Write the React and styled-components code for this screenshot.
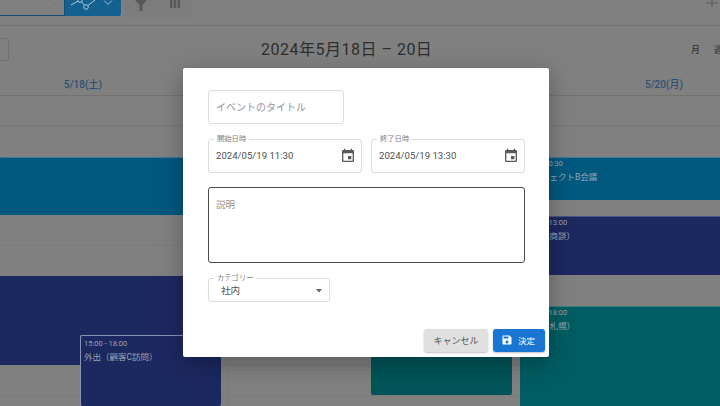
import React from "react";
import styled, { createGlobalStyle } from "styled-components";

const Global = createGlobalStyle`
  html, body { margin: 0; padding: 0; width: 720px; height: 406px; overflow: hidden; background: #808080; }
  * { box-sizing: border-box; }
  body { font-family: Roboto, "Noto Sans CJK JP", sans-serif; }
`;

const Page = styled.div`
  position: relative;
  width: 720px;
  height: 406px;
  overflow: hidden;
  background: #808080;
`;

const Toolbar = styled.div`
  height: 26px;
  border-bottom: 1px solid #737373;
  display: flex;
  align-items: flex-start;
`;

const SelectStub = styled.div`
  width: 65px;
  height: 16px;
  border-bottom: 1px solid #0d4f77;
  display: flex;
  justify-content: flex-end;
  padding-right: 4px;
  border-right: 1px solid #0d4f77;
`;

const ChartButton = styled.div`
  width: 56px;
  height: 16px;
  background: #14618f;
  border-radius: 0 0 2px 0;
  display: flex;
  align-items: flex-start;
  justify-content: space-between;
  padding: 0 8px 0 6px;
`;

const ToolIcon = styled.div`
  width: 34px;
  height: 17px;
  display: flex;
  justify-content: center;
  background: #7c7c7c;
  margin-left: ${(p) => p.$ml || 0}px;
`;

const PlusSlot = styled.div`
  margin-left: auto;
  width: 14px;
  height: 7px;
  line-height: 0;
`;

const CalHeader = styled.div`
  height: 51px;
  display: grid;
  grid-template-columns: 261px auto 1fr;
  align-items: start;
`;

const Today = styled.div`
  margin: 12px 0 0 -8px;
  width: 17px;
  height: 23px;
  border: 1px solid #6f6f6f;
  border-radius: 3px;
`;

const RangeTitle = styled.div`
  margin-top: 12px;
  font-size: 16px;
  line-height: 24px;
  color: #2e2e2e;
  letter-spacing: 0.5px;
  white-space: nowrap;
`;

const Views = styled.div`
  justify-self: end;
  margin: 17px -3px 0 0;
  display: flex;
  gap: 14px;
  font-size: 9px;
  color: #2c2c2c;
`;

const DayRow = styled.div`
  height: 19px;
  border-bottom: 1px solid #727272;
  display: grid;
  grid-template-columns: 166px 1fr 112px;
  text-align: center;
`;

const DayName = styled.div`
  grid-column: ${(p) => p.$col};
  font-size: 10px;
  line-height: 16px;
  font-weight: 500;
  color: #2f4f72;
`;

const Grid = styled.div`
  position: relative;
  height: 310px;
`;

const HLine = styled.div`
  height: ${(p) => p.$h}px;
  border-bottom: 1px solid ${(p) => p.$c || "#787878"};
`;

const Slot = styled.div`
  position: absolute;
  left: 228px;
  top: 270px;
  width: 143px;
  height: 40px;
  border-left: 1px solid #797979;
  border-top: 1px solid #7b7b7b;
`;

const Band = styled.div`
  position: absolute;
  left: ${(p) => p.$l}px;
  top: ${(p) => p.$t}px;
  width: ${(p) => p.$w}px;
  height: ${(p) => p.$h}px;
  background: ${(p) => p.$c};
  color: #97a5b4;
  border-top: 1px solid ${(p) => p.$edge || "transparent"};
  border-left: 1px solid ${(p) => p.$side || "transparent"};
  border-radius: ${(p) => p.$r || 0}px;
  padding: ${(p) => p.$pt || 0}px 0 0 ${(p) => p.$pl || 3}px;
  overflow: hidden;
`;

const EventTime = styled.div`
  font-size: 7.5px;
  line-height: 11px;
  white-space: nowrap;
`;

const EventName = styled.div`
  font-size: 8.5px;
  line-height: 14px;
  margin-top: 1px;
  white-space: nowrap;
`;

const Dialog = styled.div`
  position: absolute;
  left: 183px;
  top: 68px;
  width: 366px;
  height: 289px;
  background: #fff;
  border-radius: 2px;
  box-shadow: 0 6px 24px rgba(0,0,0,.3);
  padding: 22px 24px 0 25px;
  display: flex;
  flex-direction: column;
`;

const Outline = styled.div`
  position: relative;
  width: ${(p) => p.$w}px;
  height: ${(p) => p.$h}px;
  border: 1px solid ${(p) => p.$c || "#dcdcdc"};
  border-radius: 3px;
  display: flex;
  align-items: ${(p) => p.$align || "center"};
  justify-content: space-between;
  padding: ${(p) => p.$pad || "0 5px 0 7px"};
  background: #fff;
`;

const FloatLabel = styled.span`
  position: absolute;
  left: 5px;
  top: -6px;
  padding: 0 3px;
  background: #fff;
  font-size: 7.3px;
  line-height: 10px;
  color: #808080;
`;

const Placeholder = styled.span`
  font-size: ${(p) => p.$size || 10}px;
  line-height: 14px;
  color: #949494;
`;

const Value = styled.span`
  font-size: 9.6px;
  line-height: 14px;
  color: #505050;
`;

const DateRow = styled.div`
  display: flex;
  gap: 9px;
  margin-top: 15px;
`;

const DescWrap = styled.div`
  margin-top: 14px;
`;

const CatWrap = styled.div`
  margin-top: 15px;
`;

const Actions = styled.div`
  margin-top: 27px;
  margin-right: -20px;
  display: flex;
  justify-content: flex-end;
  gap: 5px;
`;

const CancelBtn = styled.button`
  width: 64px;
  height: 23px;
  border: 0;
  border-radius: 3px;
  background: #e0e0e0;
  box-shadow: 0 1px 2px rgba(0,0,0,.25);
  font: 400 9px Roboto, "Noto Sans CJK JP", sans-serif;
  color: #555;
  padding: 0;
`;

const SaveBtn = styled.button`
  width: 52px;
  height: 23px;
  border: 0;
  border-radius: 3px;
  background: #1976d2;
  box-shadow: 0 1px 2px rgba(0,0,0,.25);
  font: 400 8.5px Roboto, "Noto Sans CJK JP", sans-serif;
  color: #fff;
  display: flex;
  align-items: center;
  justify-content: center;
  gap: 5px;
  padding: 0 2px 1px 0;
`;

const Calendar = () => (
  <svg width="16" height="16" viewBox="0 0 24 24" fill="#595959">
    <path d="M17 12h-5v5h5v-5zM16 1v2H8V1H6v2H5c-1.11 0-1.99.9-1.99 2L3 19c0 1.1.89 2 2 2h14c1.1 0 2-.9 2-2V5c0-1.1-.9-2-2-2h-1V1h-2zm3 18H5V8h14v11z" />
  </svg>
);

const Save = () => (
  <svg width="12" height="12" viewBox="0 0 24 24" fill="#fff">
    <path d="M17 3H5c-1.11 0-2 .9-2 2v14c0 1.1.89 2 2 2h14c1.1 0 2-.9 2-2V7l-4-4zm-5 16c-1.66 0-3-1.34-3-3s1.34-3 3-3 3 1.34 3 3-1.34 3-3 3zm3-10H5V5h10v4z" />
  </svg>
);

const Chevron = ({ c = "#777" }) => (
  <svg width="10" height="6" viewBox="0 0 10 6" fill="none" stroke={c} strokeWidth="1">
    <path d="M1 0.500l4 4 4-4" />
  </svg>
);

const LineIcon = () => (
  <svg width="26" height="12" viewBox="0 0 26 12" fill="none" stroke="#b4c8d6" strokeWidth="1">
    <path d="M0 5L9 0L15 7L24 0" />
    <circle cx="15" cy="7" r="2.300" fill="#14618f" />
    <circle cx="9" cy="0" r="2.300" fill="#14618f" />
  </svg>
);

const Funnel = () => (
  <svg width="12" height="11" viewBox="0 0 12 11" fill="#585858">
    <path d="M0 0h12L7.500 5v6h-3V5z" />
  </svg>
);

const Columns = () => (
  <svg width="10" height="8" viewBox="0 0 10 8" fill="#585858">
    <path d="M0 0h2.400v8H0zM3.800 0h2.400v8H3.800zM7.600 0H10v8H7.600z" />
  </svg>
);

const Plus = () => (
  <svg width="12" height="7" viewBox="0 0 12 7" fill="#5a5a5a">
    <path d="M0 2.500h12v1H0zM5.500 0h1v7h-1z" />
  </svg>
);

const Arrow = () => (
  <svg width="6" height="4" viewBox="0 0 6 4" fill="#666">
    <path d="M0 0h6L3 3.500z" />
  </svg>
);

const BLUE = "#01587f";
const NAVY = "#1c2860";
const TEAL = "#005d63";

export default function App() {
  return (
    <Page>
      <Global />
      <Toolbar>
        <SelectStub><Chevron /></SelectStub>
        <ChartButton><LineIcon /><Chevron c="#9dbacb" /></ChartButton>
        <ToolIcon $ml={3}><Funnel /></ToolIcon>
        <ToolIcon><Columns /></ToolIcon>
        <PlusSlot><Plus /></PlusSlot>
      </Toolbar>
      <CalHeader>
        <Today />
        <RangeTitle>2024年5月18日 – 20日</RangeTitle>
        <Views><span>月</span><span>週</span></Views>
      </CalHeader>
      <DayRow>
        <DayName $col={1}>5/18(土)</DayName>
        <DayName $col={3}>5/20(月)</DayName>
      </DayRow>
      <Grid>
        <HLine $h={30} />
        <HLine $h={120} $c="#7b7b7b" />
        <HLine $h={119} />
        <HLine $h={31} $c="#7b7b7b" />
        <Slot />
        <Band $l={0} $t={61} $w={220} $h={58} $c={BLUE} $edge="#3f7a97" />
        <Band $l={0} $t={180} $w={220} $h={89} $c={NAVY} />
        <Band $l={520} $t={61} $w={200} $h={43} $c={BLUE} $edge="#3f7a97">
          <EventTime>9:30 - 10:30</EventTime>
          <EventName>プロジェクトB会議</EventName>
        </Band>
        <Band $l={520} $t={120} $w={200} $h={59} $c={NAVY} $edge="#4a5585">
          <EventTime>11:00 - 13:00</EventTime>
          <EventName>外出（商談）</EventName>
        </Band>
        <Band $l={520} $t={210} $w={200} $h={100} $c={TEAL} $edge="#3f7f83">
          <EventTime>15:00 - 18:00</EventTime>
          <EventName>出張（札幌）</EventName>
        </Band>
        <Band $l={371} $t={240} $w={141} $h={59} $c="#015458" $r={2} />
        <Band $l={80} $t={239} $w={141} $h={71} $c={NAVY} $edge="#8a93b5" $side="#8a93b5" $pl={3} $pt={2} $r={2}>
          <EventTime>15:00 - 18:00</EventTime>
          <EventName>外出（顧客C訪問）</EventName>
        </Band>
      </Grid>
      <Dialog>
        <Outline $w={136} $h={34} $pad="1px 7px 0"><Placeholder>イベントのタイトル</Placeholder></Outline>
        <DateRow>
          <Outline $w={154} $h={34}>
            <FloatLabel>開始日時</FloatLabel>
            <Value>2024/05/19 11:30</Value>
            <Calendar />
          </Outline>
          <Outline $w={154} $h={34}>
            <FloatLabel>終了日時</FloatLabel>
            <Value>2024/05/19 13:30</Value>
            <Calendar />
          </Outline>
        </DateRow>
        <DescWrap>
          <Outline $w={317} $h={76} $c="#4a4a4a" $align="flex-start" $pad="10px 7px">
            <Placeholder $size={9.5}>説明</Placeholder>
          </Outline>
        </DescWrap>
        <CatWrap>
          <Outline $w={122} $h={24} $pad="1px 7px 0 12px">
            <FloatLabel>カテゴリー</FloatLabel>
            <Value>社内</Value>
            <Arrow />
          </Outline>
        </CatWrap>
        <Actions>
          <CancelBtn>キャンセル</CancelBtn>
          <SaveBtn><Save />決定</SaveBtn>
        </Actions>
      </Dialog>
    </Page>
  );
}
